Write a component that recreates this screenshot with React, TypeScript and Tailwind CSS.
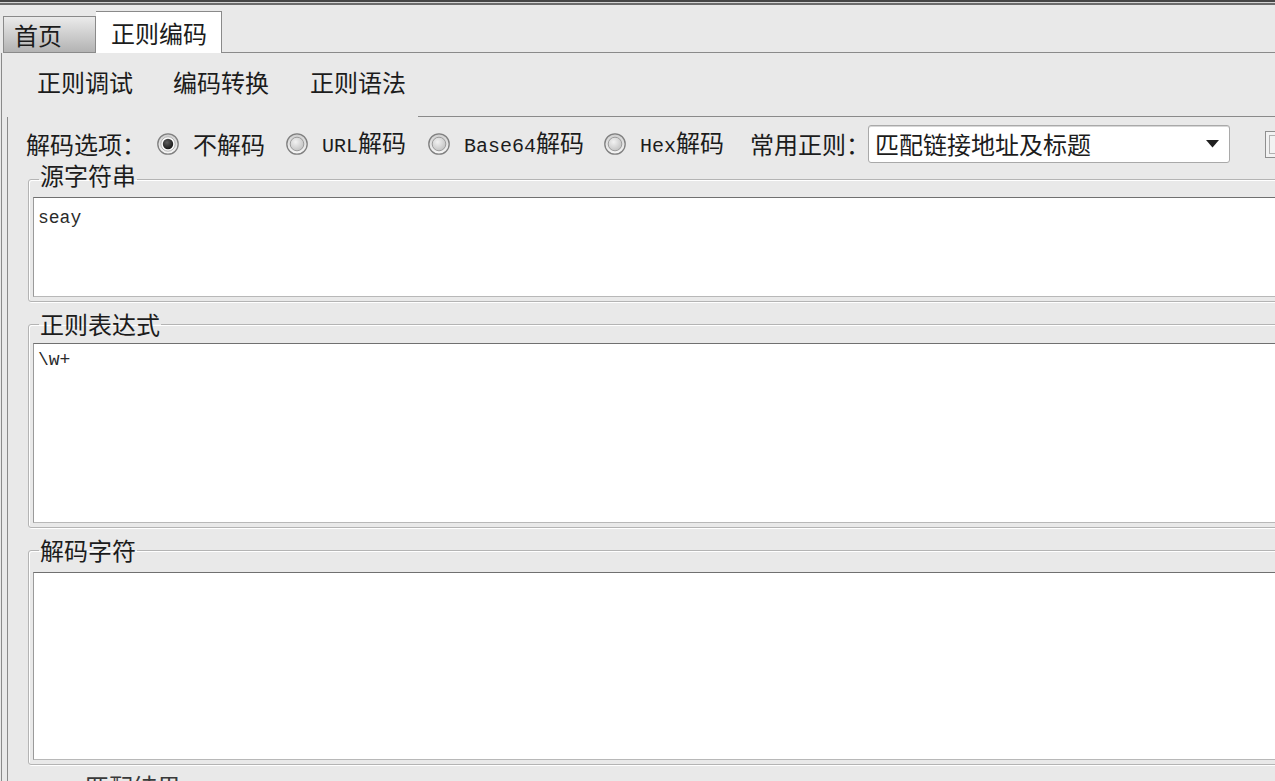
import React from 'react';

const mono = "font-['Liberation_Mono',monospace]";

function Radio({ checked = false }: { checked?: boolean }) {
  return (
    <svg width="22" height="22" viewBox="0 0 22 22" className="shrink-0">
      <defs>
        <linearGradient id="rb-outer" x1="0" y1="0" x2="0" y2="1">
          <stop offset="0%" stopColor="#cfcfcf" />
          <stop offset="100%" stopColor="#f7f7f7" />
        </linearGradient>
        <radialGradient id="rb-in" cx="40%" cy="35%" r="75%">
          <stop offset="0%" stopColor="#f2f2f2" />
          <stop offset="100%" stopColor="#bdbdbd" />
        </radialGradient>
        <radialGradient id="rb-dot" cx="40%" cy="35%" r="70%">
          <stop offset="0%" stopColor="#5e5e5e" />
          <stop offset="100%" stopColor="#141414" />
        </radialGradient>
      </defs>
      <circle cx="11" cy="11" r="10.2" fill="url(#rb-outer)" stroke="#7f7f7f" strokeWidth="1.3" />
      {checked ? (
        <>
          <circle cx="11" cy="11" r="7.2" fill="#fbfbfb" stroke="#a6a6a6" strokeWidth="0.8" />
          <circle cx="11" cy="11" r="5.2" fill="url(#rb-dot)" />
        </>
      ) : (
        <circle cx="11" cy="11" r="6.8" fill="url(#rb-in)" stroke="#9c9c9c" strokeWidth="1" />
      )}
    </svg>
  );
}

function GroupBox({
  title,
  legendClass,
  bodyClass,
  children,
}: {
  title: string;
  legendClass: string;
  bodyClass: string;
  children?: React.ReactNode;
}) {
  return (
    <fieldset className="ml-[20px] -mr-[12px] rounded-[3px] border border-[#b4b4b4] px-[4px] pb-[4px] shadow-[inset_1px_1px_0_#ffffff,1px_1px_0_#ffffff]">
      <legend className={`ml-[6px] px-[1px] leading-[24px] ${legendClass}`}>{title}</legend>
      <div
        className={`border border-[#b8b8b8] border-t-[#707070] border-l-[#9a9a9a] bg-white px-[4px] ${mono} text-[18px] leading-[24px] text-[#2a2a2a] ${bodyClass}`}
      >
        {children}
      </div>
    </fieldset>
  );
}

export default function App() {
  return (
    <div className="h-[781px] w-[1275px] overflow-hidden bg-[#e9e9e9] font-['Noto_Sans_CJK_SC',sans-serif] text-[24px] leading-[24px] text-[#1c1c1c]">
      {/* window top edge */}
      <div className="h-[2px] bg-[#454545]" />
      <div className="h-[1px] bg-[#d4d4d4]" />
      <div className="h-[2px] bg-[#6c6c6c]" />

      {/* main tabs */}
      <div className="flex h-[48px] items-end">
        <div className="ml-[3px] flex h-[37px] w-[93px] items-center border border-[#8a8a8a] bg-linear-to-b from-[#ebebeb] to-[#b3b3b3] pl-[10px]">
          首页
        </div>
        <div className="flex h-[42px] w-[126px] items-center border border-b-0 border-l-0 border-[#8a8a8a] bg-white pl-[15px]">
          正则编码
        </div>
        <div className="flex-1 border-b border-[#8a8a8a]" />
      </div>

      {/* outer pane */}
      <div className="ml-[1px] border-l border-[#8a8a8a]">
        <div className="ml-[5px]">
          {/* sub tabs */}
          <div className="flex h-[64px]">
            <div className="w-[146px] pl-[30px] pt-[17px]">正则调试</div>
            <div className="w-[136px] pl-[20px] pt-[17px]">编码转换</div>
            <div className="w-[129px] pl-[21px] pt-[17px]">正则语法</div>
            <div className="flex-1 border-b border-[#8a8a8a]" />
          </div>

          {/* inner pane */}
          <div className="border-l border-[#8a8a8a] pt-[9px]">
            <div className="flex h-[36px] items-center pl-[18px] whitespace-nowrap">
              <span>解码选项：</span>
              <span className="ml-[11px] flex items-center gap-[14px]">
                <Radio checked />
                <span>不解码</span>
              </span>
              <span className="ml-[21px] flex items-center gap-[14px]">
                <Radio />
                <span>
                  <span className={`${mono} text-[20px]`}>URL</span>解码
                </span>
              </span>
              <span className="ml-[22px] flex items-center gap-[14px]">
                <Radio />
                <span>
                  <span className={`${mono} text-[20px]`}>Base64</span>解码
                </span>
              </span>
              <span className="ml-[20px] flex items-center gap-[14px]">
                <Radio />
                <span>
                  <span className={`${mono} text-[20px]`}>Hex</span>解码
                </span>
              </span>
              <span className="ml-[26px]">常用正则：</span>
              <div className="ml-[-2px] flex h-[38px] w-[362px] shrink-0 items-center justify-between rounded-[3px] border border-[#a9a9a9] bg-white pl-[6px] pr-[10px] shadow-[inset_0_1px_0_#d6d6d6]">
                <span>匹配链接地址及标题</span>
                <svg width="13" height="8" viewBox="0 0 13 8">
                  <path d="M0 0h13L6.5 7.5z" fill="#1f1f1f" />
                </svg>
              </div>
              <div className="ml-[35px] flex h-[27px] w-[22px] shrink-0 items-center justify-center border border-[#8f8f8f] bg-[#f2f2f2]">
                <div className="h-[19px] w-[14px] border border-[#b0b0b0]" />
              </div>
            </div>

            <div className="mt-[1px]">
              <GroupBox title="源字符串" legendClass="pb-[8px]" bodyClass="mt-[2px] h-[100px] pt-[8px]">
                seay
              </GroupBox>
            </div>

            <div className="mt-[10px]">
              <GroupBox title="正则表达式" legendClass="" bodyClass="mt-[7px] h-[180px] pt-[4px]">
                \w+
              </GroupBox>
            </div>

            <div className="mt-[10px]">
              <GroupBox title="解码字符" legendClass="" bodyClass="mt-[10px] h-[188px]" />
            </div>

            <div className="mt-[9px] pl-[77px] text-[#3a3a3a]">匹配结果</div>
          </div>
        </div>
      </div>
    </div>
  );
}
